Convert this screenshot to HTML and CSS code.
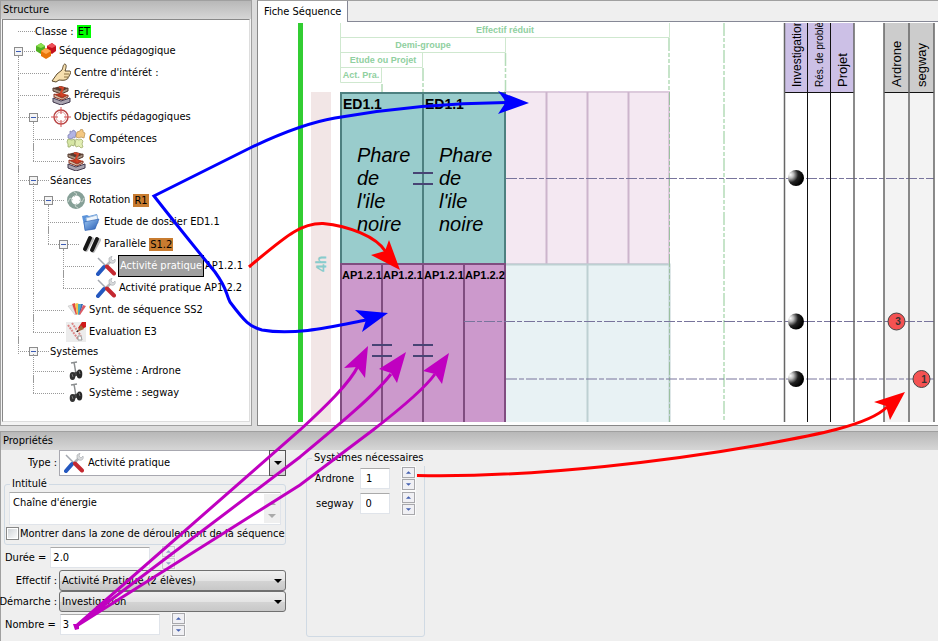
FILE: index.html
```html
<!DOCTYPE html>
<html lang="fr">
<head>
<meta charset="utf-8">
<title>Fiche Séquence</title>
<link rel="stylesheet" href="styles.css">
</head>
<body>
<svg class="defs" aria-hidden="true">
  <defs>
    <radialGradient id="ball" cx="0.15" cy="0.3" r="0.8"><stop offset="0" stop-color="#fff"/><stop offset="0.25" stop-color="#bbb"/><stop offset="0.6" stop-color="#222"/><stop offset="1" stop-color="#000"/></radialGradient>
    <linearGradient id="folder" x1="0" y1="0" x2="1" y2="1"><stop offset="0" stop-color="#9cc8f4"/><stop offset="1" stop-color="#2458b0"/></linearGradient>
  </defs>
  <symbol id="i-cubes" viewBox="0 0 20 20">
    <path d="M0 5l5-3 4 3v5l-4 3-5-3z" fill="#4fae22"/><path d="M0 5l5-3 4 3-4 2z" fill="#8be04e"/>
    <path d="M11 5l5-3 4 3v5l-4 3-5-3z" fill="#c4101c"/><path d="M11 5l5-3 4 3-4 2z" fill="#ee5058"/>
    <path d="M5 10l5-3 5 3v5l-5 3-5-3z" fill="#e87408"/><path d="M5 10l5-3 5 3-5 3z" fill="#ffa84c"/>
  </symbol>
  <symbol id="i-thumb" viewBox="0 0 20 20">
    <path d="M1 18l5-7 5-4c1-2 1-6 3-6 2 1 1 4 0 7l5 0c1 1 1 2 0 2 1 1 0 2-1 2 1 1 0 2-1 2 0 1 0 2-1 2-2 2-6 1-8 1l-3 2z" fill="#f6dfae" stroke="#5c4a2c"/>
    <path d="M13 11h5M13 14h4" stroke="#8a7040" fill="none"/>
  </symbol>
  <symbol id="i-books" viewBox="0 0 20 20">
    <path d="M2 3l8-2 7 2-7 3z" fill="#5b3a2c"/><path d="M2 3v3l8 3 7-3V3l-7 3z" fill="#a89484" stroke="#54382c"/>
    <path d="M3 9l8-1 6 2-6 3z" fill="#c43a20"/><path d="M3 9v3l8 3 6-3v-2l-6 3z" fill="#d8c4ac" stroke="#8c3020"/>
    <path d="M2 13l8 3 9-3v4l-9 3-8-3z" fill="#aaa4b0" stroke="#40384c"/><path d="M8 2l4 1-2 5 2 3" stroke="#d24428" stroke-width="2" fill="none"/>
  </symbol>
  <symbol id="i-target" viewBox="0 0 20 20">
    <circle cx="10" cy="10" r="7" fill="none" stroke="#b84444" stroke-width="1.4"/><circle cx="10" cy="10" r="5" fill="none" stroke="#e0a4a4"/>
    <path d="M10 0v7M10 13v7M0 10h7M13 10h7" stroke="#d45050"/>
  </symbol>
  <symbol id="i-puzzle" viewBox="0 0 20 20">
    <path d="M4 2l2 1 1-2 2 1 1 2-1 5-2-1-1 2-4-1 0-3 2-1z" fill="#b2b4e4" stroke="#8184b4" stroke-width=".8"/>
    <path d="M11 3l3-1 1-2 2 1 0 2 2 1-1 5-3-1-2 1-3-1z" fill="#f4c882" stroke="#bd9558" stroke-width=".8"/>
    <path d="M2 10l4 1 2-1 1 3-1 4-3-1-1 2-2 0 0-3-1-2z" fill="#d6e6a4" stroke="#98a868" stroke-width=".8"/>
    <path d="M10 10l3 1 2-1 2 2-1 3 1 3-2 1-2-2-3 1-1-3z" fill="#e2eeb4" stroke="#a4b070" stroke-width=".8"/>
  </symbol>
  <symbol id="i-cycle" viewBox="0 0 20 20">
    <circle cx="10" cy="10" r="6.800" fill="none" stroke="#86a097" stroke-width="4.400"/>
    <path d="M8 2l3 2-3 3M18 8l-2 4-3-2M12 18l-3-2 2-3M2 12l2-4 3 2" fill="none" stroke="#c4d0ca" stroke-width="1"/>
  </symbol>
  <symbol id="i-folder" viewBox="0 0 20 20">
    <path d="M1 4l5-1 2 1 8-2 1 5-3 10-10 1z" fill="#5b93da"/><path d="M5 6l11-3 1 8-10 4z" fill="#eef5fc" stroke="#9cbce0"/>
    <path d="M3 10l15-3-4 10-10 1.500z" fill="url(#folder)" stroke="#2a5cae" stroke-width=".6"/>
  </symbol>
  <symbol id="i-bars" viewBox="0 0 20 20">
    <path d="M5 16L11 5M12 17L18 6" stroke="#bbb" stroke-width="4" stroke-linecap="round"/><path d="M4 15L9 4M11 16L16 5" stroke="#161616" stroke-width="4" stroke-linecap="round"/>
  </symbol>
  <symbol id="i-tools" viewBox="0 0 20 20">
    <path d="M5 15L15 5" stroke="#b4b8bc" stroke-width="2.500"/><path d="M13 5l0-3 3-2-1 3 2 2 2-2c1 3-1 5-4 4z" fill="#d8dadc" stroke="#a4a8ac" stroke-width=".6"/>
    <path d="M2 2l9 9" stroke="#a4a8b0" stroke-width="1.500"/>
    <path d="M2 18l6-7" stroke="#2458c0" stroke-width="4" stroke-linecap="round"/><path d="M11 10.500l7 7" stroke="#c42830" stroke-width="4" stroke-linecap="round"/>
  </symbol>
  <symbol id="i-cards" viewBox="0 0 20 20">
    <path d="M2 6l4-1 4 9-1 1z" fill="#e4e4e4" stroke="#bbb" stroke-width=".5"/><path d="M6 4l3-1 2 11-1 1z" fill="#e04c44"/><path d="M9 4l2-1 2 1-1 11-1-1z" fill="#f2c44c"/><path d="M12 4l3 0-1 10-2 1z" fill="#48b0c0"/><path d="M15 4l2 0-3 10-1 1z" fill="#3c68b8"/><path d="M17 5l3 1-6 9-1-1z" fill="#dc5c64"/>
  </symbol>
  <symbol id="i-eval" viewBox="0 0 20 20">
    <path d="M0 0h20v20H0z" fill="#ececec"/><path d="M2 3l10 14M6 1l9 13" stroke="#dc8888" stroke-width="2" stroke-dasharray="2 1"/><path d="M12 14l3 0 1 4-4 0z" fill="#fff" stroke="#999"/>
    <path d="M20 0v5l-6 3-2-2 4-6z" fill="#d01818"/><path d="M15 3l3 4-7 3z" fill="#a06c3c"/><path d="M12 8l-2 2 2 0z" fill="#222"/>
  </symbol>
  <symbol id="i-segway" viewBox="0 0 20 20">
    <path d="M5 2l6-1M8 1l2 12" stroke="#8b8e90" stroke-width="1.500" fill="none"/><path d="M6 12l7-2 2 3-7 3z" fill="#444"/>
    <ellipse cx="6.500" cy="15" rx="2.800" ry="4" fill="#333"/><ellipse cx="13.500" cy="13" rx="2.800" ry="4.500" fill="#282828"/><path d="M6 13l1 3M13 10l1 3" stroke="#777"/>
  </symbol>
  <symbol id="i-up" viewBox="0 0 9 8"><path d="M1.500 5.500h6L4.500 2.500z" fill="#4460b0"/></symbol>
  <symbol id="i-down" viewBox="0 0 9 8"><path d="M1.500 2.500h6L4.500 5.500z" fill="#4460b0"/></symbol>
  <symbol id="i-drop" viewBox="0 0 8 4"><path d="M0 0h8L4 4z"/></symbol>
</svg>

<main class="app">
  <section class="structure">
    <h2 class="title">Structure</h2>
    <div class="tree">
      <ul>
        <li class="plain"><div class="row short"><span class="lead"></span><span>Classe : </span><mark class="green">ET</mark></div></li>
        <li class="plain"><div class="row"><span class="lead"><button class="toggle" aria-label="Replier"></button></span><svg class="icon"><use href="#i-cubes"/></svg>Séquence pédagogique</div>
          <ul>
            <li><div class="row"><span class="lead"></span><svg class="icon"><use href="#i-thumb"/></svg>Centre d'intérét :</div></li>
            <li><div class="row"><span class="lead"></span><svg class="icon"><use href="#i-books"/></svg>Prérequis</div></li>
            <li><div class="row"><span class="lead"><button class="toggle" aria-label="Replier"></button></span><svg class="icon"><use href="#i-target"/></svg>Objectifs pédagogiques</div>
              <ul>
                <li><div class="row"><span class="lead"></span><svg class="icon"><use href="#i-puzzle"/></svg>Compétences</div></li>
                <li><div class="row"><span class="lead"></span><svg class="icon"><use href="#i-books"/></svg>Savoirs</div></li>
              </ul>
            </li>
            <li><div class="row short"><span class="lead"><button class="toggle" aria-label="Replier"></button></span>Séances</div>
              <ul>
                <li><div class="row"><span class="lead"><button class="toggle" aria-label="Replier"></button></span><svg class="icon"><use href="#i-cycle"/></svg>Rotation <mark>R1</mark></div>
                  <ul>
                    <li><div class="row"><span class="lead"></span><svg class="icon"><use href="#i-folder"/></svg>Etude de dossier <span>ED1.1</span></div></li>
                    <li><div class="row"><span class="lead"><button class="toggle" aria-label="Replier"></button></span><svg class="icon"><use href="#i-bars"/></svg>Parallèle <mark>S1.2</mark></div>
                      <ul>
                        <li><div class="row"><span class="lead"></span><svg class="icon"><use href="#i-tools"/></svg><span class="selected">Activité pratique</span><span>AP1.2.1</span></div></li>
                        <li><div class="row"><span class="lead"></span><svg class="icon"><use href="#i-tools"/></svg>Activité pratique <span>AP1.2.2</span></div></li>
                      </ul>
                    </li>
                  </ul>
                </li>
                <li><div class="row"><span class="lead"></span><svg class="icon"><use href="#i-cards"/></svg>Synt. de séquence <span>SS2</span></div></li>
                <li><div class="row"><span class="lead"></span><svg class="icon"><use href="#i-eval"/></svg>Evaluation <span>E3</span></div></li>
              </ul>
            </li>
            <li><div class="row short"><span class="lead"><button class="toggle" aria-label="Replier"></button></span>Systèmes</div>
              <ul>
                <li><div class="row"><span class="lead"></span><svg class="icon"><use href="#i-segway"/></svg>Système : <span>Ardrone</span></div></li>
                <li><div class="row"><span class="lead"></span><svg class="icon"><use href="#i-segway"/></svg>Système : <span>segway</span></div></li>
              </ul>
            </li>
          </ul>
        </li>
      </ul>
    </div>
  </section>

  <section class="sheet">
    <div class="tabs"><button class="tab">Fiche Séquence</button></div>
    <div class="canvas">
      <svg class="chart" viewBox="258 23 680 399">
        <rect x="298" y="23" width="5" height="399" fill="#32cd32"/>
        <rect x="311" y="92" width="20" height="330" fill="#f2e6e6"/>
        <text class="hours" transform="translate(326 272) rotate(-90)">4h</text>
        <g fill="none" stroke="#cfe8cf">
          <path d="M340.500 23V82.500H381.500V67.500M340.500 67.500H422.500V52.500M340.500 52.500H505.500V37.500M340.500 37.500H669.500V23"/>
          <path stroke="#b4dcb8" stroke-width="1.500" stroke-dasharray="13 2 4 2 4 2" d="M382 84V92M423 68V92M505.500 53V92M669 38V92M724 23V422"/>
        </g>
        <g class="scale">
          <text x="505" y="33">Effectif réduit</text><text x="423" y="48">Demi-groupe</text><text x="383" y="63">Etude ou Projet</text><text x="361" y="78">Act. Pra.</text>
        </g>
        <rect x="505" y="92" width="164" height="172" fill="#f4e8f2" stroke="#dccadc" stroke-width="2"/>
        <path d="M546.500 92V264M587.500 92V264M628.500 92V264" stroke="#ccb4cc" stroke-width="2"/>
        <path d="M505 264H669V422H505z" fill="#e8f2f4"/>
        <path d="M505 264.500H669.500V422M587.500 264V422" fill="none" stroke="#bdd0d2" stroke-width="2"/>
        <path d="M669.500 92V422" stroke="#9cc0a0" stroke-dasharray="13 2 4 2 4 2"/>
        <rect x="341" y="93" width="164" height="171" fill="#99cccc"/>
        <path d="M341 264V93H505V264M423 93V264" fill="none" stroke="#4d8080" stroke-width="2"/>
        <rect x="341" y="264" width="164" height="158" fill="#cc99cc"/>
        <path d="M341 422V264H505V422M382 264V422M423 264V422M464 264V422" fill="none" stroke="#804d80" stroke-width="2"/>
        <path d="M413 173H433M413 184H433M372 345H392M372 356H392M413 345H433M413 356H433" stroke="#484474" stroke-width="2"/>
        <g class="ed"><text x="343" y="109">ED1.1</text><text x="425" y="109">ED1.1</text></g>
        <g class="name">
          <text x="357" y="162">Phare</text><text x="357" y="185">de</text><text x="357" y="208">l'ile</text><text x="357" y="231">noire</text>
          <text x="439" y="162">Phare</text><text x="439" y="185">de</text><text x="439" y="208">l'ile</text><text x="439" y="231">noire</text>
        </g>
        <g class="ap"><text x="342" y="279">AP1.2.1</text><text x="383" y="279">AP1.2.1</text><text x="424" y="279">AP1.2.1</text><text x="465" y="279">AP1.2.2</text></g>
        <rect x="784" y="23" width="70" height="69" fill="#ccc0e6"/>
        <rect x="884" y="23" width="50" height="69" fill="#ccc"/>
        <rect x="884" y="92" width="50" height="330" fill="#f3f3f3"/>
        <path d="M506 178.500H934M464 321.500H934M506 379H934" stroke="#78749c" stroke-dasharray="11 2 5 2"/>
        <path d="M807.500 23V422M830.500 23V422M784 92.500H854M884 92.500H934" stroke="#111"/>
        <path d="M784.500 23V422M854 23V422M884 23V422M909 23V422M934 23V422" stroke="#666" stroke-width="1.500"/>
        <g class="heads">
          <text class="long" transform="translate(801 87) rotate(-90)">Investigation</text>
          <text class="tiny" transform="translate(823 87) rotate(-90)">Rés. de problèmes</text>
          <text transform="translate(847 87) rotate(-90)">Projet</text>
          <text transform="translate(901 87) rotate(-90)">Ardrone</text>
          <text transform="translate(926 87) rotate(-90)">segway</text>
        </g>
        <g fill="url(#ball)"><circle cx="796" cy="178" r="8"/><circle cx="796" cy="321.500" r="8"/><circle cx="796" cy="379" r="8"/></g>
        <g fill="#f45252" stroke="#444"><circle cx="896.500" cy="321.500" r="8.500"/><circle cx="921.500" cy="379" r="8.500"/></g>
        <g class="count"><text x="898" y="325">3</text><text x="924" y="383">1</text></g>
      </svg>
    </div>
  </section>

  <section class="properties">
    <h2 class="title">Propriétés</h2>
    <form class="forms">
      <div class="main-form">
        <div class="field"><label for="type">Type :</label>
          <div class="typebox"><select id="type"><option>Activité pratique</option></select><svg class="icon"><use href="#i-tools"/></svg><span class="dropbtn"><svg><use href="#i-drop"/></svg></span></div></div>
        <fieldset class="heading"><legend>Intitulé</legend>
          <div class="memo"><textarea id="intitule" aria-label="Intitulé">Chaîne d'énergie</textarea>
            <span class="scroll"><svg><path d="M1 5h8L5 1z"/></svg><svg><path d="M1 1h8L5 5z"/></svg></span></div>
          <label class="check"><input type="checkbox">Montrer dans la zone de déroulement de la séquence</label>
        </fieldset>
        <div class="num"><label for="duree">Durée =</label><input id="duree" value="2.0"><span class="spin faded"><button type="button" aria-label="Plus"><svg><use href="#i-up"/></svg></button><button type="button" aria-label="Moins"><svg><use href="#i-down"/></svg></button></span></div>
        <div class="field"><label for="effectif">Effectif :</label><div class="pick"><select id="effectif"><option>Activité Pratique (2 élèves)</option></select><svg><use href="#i-drop"/></svg></div></div>
        <div class="field"><label for="demarche">Démarche :</label><div class="pick"><select id="demarche"><option>Investigation</option></select><svg><use href="#i-drop"/></svg></div></div>
        <div class="num"><label for="nombre">Nombre =</label><input id="nombre" value="3"><span class="spin"><button type="button" aria-label="Plus"><svg><use href="#i-up"/></svg></button><button type="button" aria-label="Moins"><svg><use href="#i-down"/></svg></button></span></div>
      </div>
      <fieldset class="systems"><legend>Systèmes nécessaires</legend>
        <div class="sys"><label for="ardrone">Ardrone</label><input id="ardrone" value="1"><span class="spin"><button type="button" aria-label="Plus"><svg><use href="#i-up"/></svg></button><button type="button" aria-label="Moins"><svg><use href="#i-down"/></svg></button></span></div>
        <div class="sys"><label for="segway">segway</label><input id="segway" value="0"><span class="spin"><button type="button" aria-label="Plus"><svg><use href="#i-up"/></svg></button><button type="button" aria-label="Moins"><svg><use href="#i-down"/></svg></button></span></div>
      </fieldset>
    </form>
  </section>
</main>

<!-- annotation arrows drawn over the whole window -->
<svg class="arrows" viewBox="0 0 938 641" preserveAspectRatio="xMinYMin meet" aria-hidden="true">
  <g fill="none" stroke-width="3">
    <path stroke="#00f" d="M250 148L154 196C172 219 206 261 215 272C228 290 225 292 230 302C245 322 250 327 262 330C295 336 335 326 366 320M250 148Q300 124 335 118Q420 103 506 102.500"/>
    <path stroke="red" d="M249 267C290 232 303 223 323 223.500C348 226 376 236 386 252M417 475.500C540 478 680 459 760 445C810 436 868 426 887 407"/>
    <path stroke="#c000c0" d="M75 627L300 430C325 407 350 383 358 366M75 627L300 457C335 428 375 395 391 374M75 627L300 485L373 430C395 413 425 388 435 374"/>
  </g>
  <path fill="#00f" d="M529 103L498 91L506 102L498 114zM388 313L355 310L366 320L362 332z"/>
  <path fill="red" d="M400 270L371 255L385 251L389 240zM905 392L874 402L886 406L890 420z"/>
  <path fill="#c000c0" d="M368 346L344 368L357 367L365 378zM406 352L379 369L391 373L397 383zM449 353L423 371L435 374L442 384zM73 624l6 0 0 5-4 1z"/>
</svg>
</body>
</html>
```
FILE: styles.css
```css
* { box-sizing: border-box; }

body {
  margin: 0;
  background: #dcdcdc;
  color: #000;
  font: 11px/16px "DejaVu Sans Condensed", "Noto Sans", sans-serif;
}

ul { list-style: none; margin: 0; padding: 0; }
input, select, textarea, button { font: inherit; color: inherit; margin: 0; }
.defs { position: absolute; width: 0; height: 0; }

.app {
  display: grid;
  grid-template-columns: 252px minmax(0, 1fr);
  grid-template-rows: 1fr auto;
  gap: 5px;
  min-height: 100vh;
}

.title {
  margin: 0;
  padding: 1px 2px 0;
  height: 18px;
  font-size: 11px;
  font-weight: normal;
  background: linear-gradient(#b8b8b8, #d6d6d6);
}

/* structure tree */
.structure {
  display: flex;
  flex-direction: column;
  border: 1px solid #a0a0a0;
  background: #f4f4f4;
}

.tree {
  flex: 1;
  margin: 0 1px 3px;
  padding-top: 3px;
  border: 1px solid #888;
  border-right-color: #ddd;
  border-bottom-color: #ddd;
  background: #fff;
}

.tree li { position: relative; }
.tree li li { margin-left: 15px; }
.tree li li::before {
  content: "";
  position: absolute;
  top: -6px;
  bottom: 0;
  left: 0;
  border-left: 1px dotted #999;
}
.tree li li:last-child::before { bottom: auto; height: 17px; }

.row { display: flex; align-items: center; height: 22px; white-space: pre; }
.row.short { height: 17px; }
.lead {
  flex: none;
  display: flex;
  align-items: center;
  width: 32px;
  height: 9px;
  background: repeating-linear-gradient(90deg, #999 0 1px, transparent 1px 2px) 0 4px / 100% 1px no-repeat;
}
.plain > .row > .lead { background-position: 15px 4px; }
.toggle {
  position: relative;
  width: 9px;
  height: 9px;
  margin-left: 11px;
  padding: 0;
  border: 1px solid #8c8c8c;
  background: linear-gradient(#3c5cb4, #3c5cb4) center / 5px 1px no-repeat, #f4f4f4;
}
.icon { flex: none; width: 20px; height: 20px; margin: 0 3px 0 1px; }
mark { padding: 0 1px; line-height: 13px; background: #c87c30; color: inherit; }
mark.green { background: #0f0; }
.selected {
  height: 22px;
  margin: 0 1px 0 -1px;
  padding: 2px 1px 0;
  border: 1px solid #000;
  background: #a0a0a0;
  color: #fff;
}

/* sheet with its tab */
.sheet {
  display: flex;
  flex-direction: column;
  min-width: 0;
  border-top: 1px solid #a0a0a0;
  border-left: 1px solid #888;
  background: #fff;
}
.tabs { height: 21px; background: #efefef; border-bottom: 1px solid #868896; }
.tab {
  height: 21px;
  padding: 0 6px;
  border: 0;
  border-right: 1px solid #868896;
  background: #fff;
}
.canvas { flex: 1; overflow: hidden; padding-top: 1px; border-bottom: 1px solid #888; }
.chart { display: block; width: 680px; height: 399px; font-family: "Liberation Sans", Arial, sans-serif; }
.hours { font-size: 14px; font-weight: bold; fill: #88cccc; }
.scale { font-size: 9px; font-weight: bold; fill: #90d0a0; text-anchor: middle; }
.ed { font-size: 14px; font-weight: bold; }
.name { font-size: 20px; font-style: italic; }
.ap { font-size: 11px; font-weight: bold; }
.heads { font-size: 13px; }
.heads .long { font-size: 12px; }
.heads .tiny { font-size: 10px; }
.count { font-size: 10px; font-weight: bold; fill: #333; text-anchor: middle; }

/* properties */
.properties {
  grid-column: 1 / -1;
  min-height: 210px;
  border-top: 1px solid #a0a0a0;
  border-left: 1px solid #a0a0a0;
  background: #efefef;
}
.forms { display: flex; align-items: flex-start; gap: 20px; padding-left: 1px; }
.main-form { width: 284px; }
.field { display: grid; grid-template-columns: 55px 1fr; gap: 2px; align-items: center; }
.field label { text-align: right; white-space: nowrap; justify-self: end; }

.typebox { display: grid; align-items: center; }
.typebox > * { grid-area: 1 / 1; }
.typebox select {
  appearance: none;
  width: 100%;
  height: 26px;
  padding-left: 28px;
  border: 1px solid #a8a8b0;
  border-radius: 0;
  background: #fff;
}
.typebox .icon { margin-left: 5px; }
.dropbtn {
  justify-self: end;
  display: grid;
  place-items: center;
  width: 17px;
  height: 26px;
  border: 1px solid #555;
  background: linear-gradient(#f4f4f4, #d0d0d0);
  pointer-events: none;
}
.dropbtn svg, .pick svg { width: 8px; height: 4px; pointer-events: none; }

fieldset { min-width: 0; margin: 0; border: 1px solid #d0dae4; border-radius: 3px; }
legend { padding: 0 2px; }
.heading { margin-left: 2px; padding: 0 4px 2px; }
.heading legend { margin-left: 1px; }
.memo { display: grid; }
.memo > * { grid-area: 1 / 1; }
.memo textarea {
  width: 100%;
  height: 33px;
  padding: 2px 3px;
  border: 1px solid #e0e4ea;
  border-top-color: #aaa;
  background: #fff;
  resize: none;
  overflow: hidden;
}
.scroll {
  justify-self: end;
  display: flex;
  flex-direction: column;
  justify-content: space-between;
  align-items: center;
  width: 16px;
  margin: 2px 1px;
  padding: 6px 0 4px;
  background: #efefef;
}
.scroll svg { width: 10px; height: 6px; fill: #aaa; }
.check { display: flex; align-items: center; gap: 1px; height: 17px; margin-left: -3px; white-space: nowrap; }
.check input {
  appearance: none;
  flex: none;
  width: 13px;
  height: 13px;
  border: 1px solid #888;
  background: linear-gradient(135deg, #ccd0d4, #fff);
  outline: 1px solid #fff;
  outline-offset: -2px;
}

.num, .sys { display: flex; align-items: center; }
.num { height: 25px; gap: 4px; padding-left: 3px; }
.num input, .sys input {
  width: 100px;
  height: 21px;
  padding: 0 2px;
  border: 1px solid #e0e4ea;
  border-top-color: #aaa;
  background: #fff;
}
.spin { display: grid; gap: 1px; margin-left: 5px; border: 1px solid #fafafa; }
.num .spin { margin-left: 7px; }
.spin button {
  display: block;
  width: 13px;
  height: 11px;
  padding: 1px;
  border: 1px solid #a8a8ac;
  background: #f0f0f4;
}
.spin svg { display: block; width: 9px; height: 7px; }
.faded { opacity: 0.5; }

.pick { display: grid; align-items: center; }
.pick > * { grid-area: 1 / 1; }
.pick svg { justify-self: end; margin-right: 4px; }
.pick select {
  appearance: none;
  width: 100%;
  height: 21px;
  padding: 0 2px;
  border: 1px solid #707070;
  border-radius: 3px;
  background: linear-gradient(#f0f0f0, #e4e4e4 50%, #d4d4d4 51%, #c8c8c8);
}

.systems { width: 119px; height: 187px; padding: 0 9px; }
.systems legend { margin-left: -4px; white-space: nowrap; }
.sys { height: 25px; gap: 6px; }
.sys label { width: 38px; display: flex; justify-content: flex-end; }
.sys input { width: 30px; padding-left: 5px; }

.arrows {
  position: absolute;
  top: 0;
  left: 0;
  width: 938px;
  height: 641px;
  pointer-events: none;
}
```
